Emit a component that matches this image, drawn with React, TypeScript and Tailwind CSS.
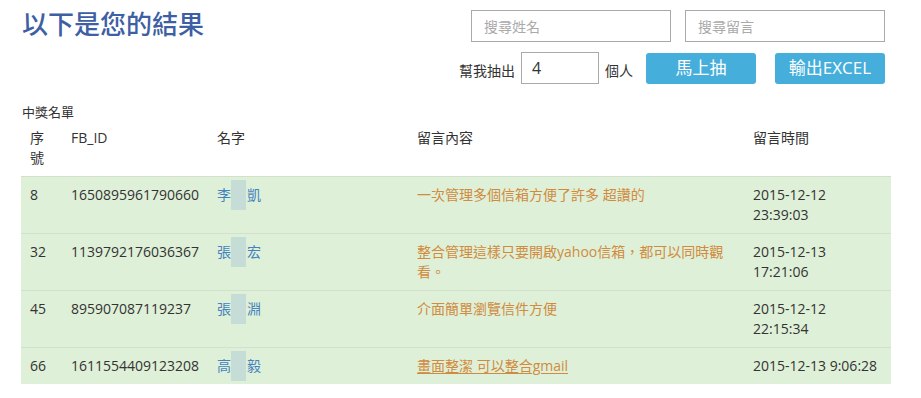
import React from "react";

const FONT = "font-['Open_Sans','Noto_Sans_CJK_TC',sans-serif]";

type Winner = {
  no: string;
  fbId: string;
  first: string;
  last: string;
  comment: React.ReactNode;
  date: string;
  time: string;
  oneLine?: boolean;
  link?: boolean;
};

const winners: Winner[] = [
  {
    no: "8",
    fbId: "1650895961790660",
    first: "李",
    last: "凱",
    comment: "一次管理多個信箱方便了許多 超讚的",
    date: "2015-12-12",
    time: "23:39:03",
  },
  {
    no: "32",
    fbId: "1139792176036367",
    first: "張",
    last: "宏",
    comment: (
      <>
        整合管理這樣只要開啟yahoo信箱，都可以同時觀
        <br />
        看。
      </>
    ),
    date: "2015-12-13",
    time: "17:21:06",
  },
  {
    no: "45",
    fbId: "895907087119237",
    first: "張",
    last: "淵",
    comment: "介面簡單瀏覽信件方便",
    date: "2015-12-12",
    time: "22:15:34",
  },
  {
    no: "66",
    fbId: "1611554409123208",
    first: "高",
    last: "毅",
    comment: "畫面整潔 可以整合gmail",
    date: "2015-12-13",
    time: "9:06:28",
    oneLine: true,
    link: true,
  },
];

function Name({ first, last }: { first: string; last: string }) {
  return (
    <span className="text-[#4583c0]">
      {first}
      {/* blurred middle character */}
      <span className="relative inline-block w-[16px] h-[20px] align-top">
        <span className="absolute left-0 right-[1px] -top-[5px] h-[30px] bg-[#c6dcd6]" />
      </span>
      {last}
    </span>
  );
}

export default function App() {
  return (
    <div className={`${FONT} min-h-screen bg-white text-[#333] text-[14px]`}>
      <div className="ml-[21px] w-[870px] pt-[10px]">
        {/* Top bar */}
        <div className="flex justify-between items-start">
          <h1 className="ml-[1px] text-[26px] leading-[28px] font-medium text-[#3e5fa3]">
            以下是您的結果
          </h1>
          <div className="mr-[6px] flex flex-col items-end gap-[10px]">
            <div className="flex gap-[14px]">
              <input
                className="w-[200px] h-[32px] border border-[#aaa] px-[12px] text-[14px] placeholder:text-[#aaa] outline-none"
                placeholder="搜尋姓名"
              />
              <input
                className="w-[200px] h-[32px] border border-[#aaa] px-[12px] text-[14px] placeholder:text-[#aaa] outline-none"
                placeholder="搜尋留言"
              />
            </div>
            <div className="flex items-center">
              <span className="mt-[4px]">幫我抽出</span>
              <input
                className="ml-[6px] w-[78px] h-[32px] border border-[#aaa] px-[10px] text-[16px] outline-none"
                defaultValue="4"
              />
              <span className="ml-[6px] mt-[4px]">個人</span>
              <button className="ml-[13px] w-[110px] h-[31px] rounded-[3px] bg-[#45aedb] text-white text-[17px]">
                馬上抽
              </button>
              <button className="ml-[19px] w-[110px] h-[31px] rounded-[3px] bg-[#45aedb] text-white text-[17px]">
                輸出EXCEL
              </button>
            </div>
          </div>
        </div>

        <div className="mt-[20px] ml-[1px] text-[13px] leading-[16px]">中獎名單</div>

        {/* Winners table */}
        <table className="w-[870px] table-fixed border-collapse text-left leading-[20px]">
          <colgroup>
            <col className="w-[42px]" />
            <col className="w-[146px]" />
            <col className="w-[200px]" />
            <col className="w-[336px]" />
            <col className="w-[146px]" />
          </colgroup>
          <thead>
            <tr className="align-top">
              <th className="p-[8px] pl-[9px] font-normal">序號</th>
              <th className="p-[8px] font-normal">FB_ID</th>
              <th className="p-[8px] font-normal">名字</th>
              <th className="p-[8px] font-normal">留言內容</th>
              <th className="p-[8px] font-normal">留言時間</th>
            </tr>
          </thead>
          <tbody>
            {winners.map((w) => (
              <tr key={w.no} className="align-top bg-[#dff0d8] border-t border-[#d3e1cc]">
                <td className="p-[8px] pl-[9px]">{w.no}</td>
                <td className="p-[8px]">{w.fbId}</td>
                <td className="p-[8px]">
                  <Name first={w.first} last={w.last} />
                </td>
                <td className={`p-[8px] text-[#d08b3e] ${w.link ? "underline underline-offset-2" : ""}`}>
                  {w.comment}
                </td>
                <td className="p-[8px] whitespace-nowrap">
                  {w.oneLine ? (
                    `${w.date} ${w.time}`
                  ) : (
                    <>
                      {w.date}
                      <br />
                      {w.time}
                    </>
                  )}
                </td>
              </tr>
            ))}
          </tbody>
        </table>
      </div>
    </div>
  );
}
